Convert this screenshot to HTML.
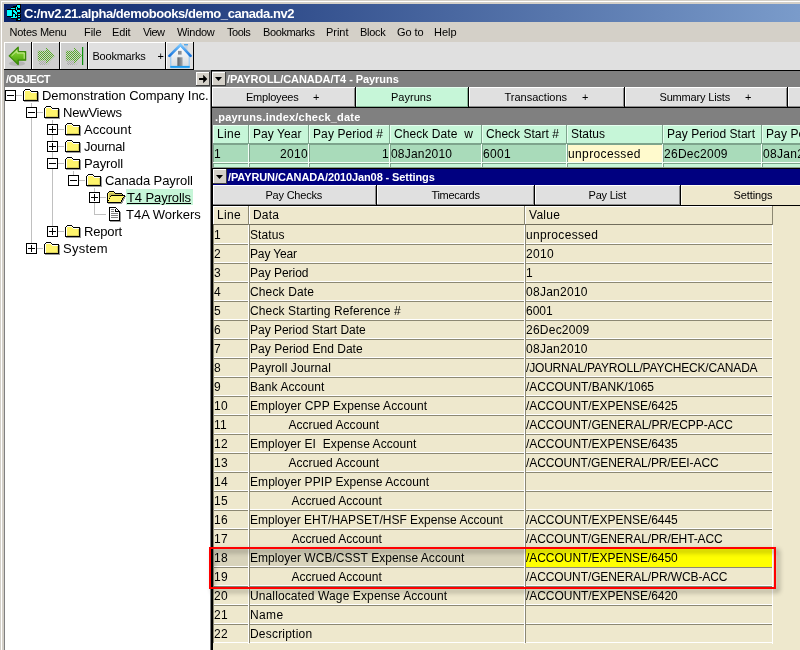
<!DOCTYPE html>
<html><head><meta charset="utf-8"><title>NewViews</title><style>html,body{margin:0;padding:0}
body{width:800px;height:650px;overflow:hidden;position:relative;background:#d4d0c8;font-family:"Liberation Sans",sans-serif}
#bg,#tx,#top{position:absolute;left:0;top:0;width:800px;height:650px;overflow:hidden}
#tx{will-change:transform}
#bg>div,#bg>svg,#tx>span,#top>div{position:absolute;display:block}
#tx>span{white-space:nowrap;line-height:normal}
</style></head><body>
<div id="bg">
<div style="left:0px;top:0px;width:800px;height:650px;background:#d4d0c8;"></div>
<div style="left:1px;top:1px;width:799px;height:1px;background:#fff;"></div>
<div style="left:1px;top:1px;width:1px;height:649px;background:#fff;"></div>
<div style="left:4px;top:4px;width:796px;height:18px;background:linear-gradient(90deg,#0a246a 0px,#a6caf0 1106px);"></div>
<svg style="left:7px;top:4px" width="15" height="17" viewBox="0 0 15 17" shape-rendering="crispEdges"><rect x="10" y="0" width="4" height="1" fill="#000"/><rect x="9" y="1" width="1" height="1" fill="#000"/><rect x="10" y="1" width="3" height="1" fill="#00ffff"/><rect x="13" y="1" width="1" height="1" fill="#000"/><rect x="6" y="2" width="4" height="1" fill="#000"/><rect x="10" y="2" width="3" height="1" fill="#00ffff"/><rect x="13" y="2" width="1" height="1" fill="#000"/><rect x="4" y="3" width="5" height="1" fill="#000"/><rect x="9" y="3" width="1" height="1" fill="#00ffff"/><rect x="10" y="3" width="1" height="1" fill="#000"/><rect x="11" y="3" width="2" height="1" fill="#00ffff"/><rect x="13" y="3" width="1" height="1" fill="#000"/><rect x="4" y="4" width="4" height="1" fill="#00ffff"/><rect x="8" y="4" width="1" height="1" fill="#000"/><rect x="9" y="4" width="1" height="1" fill="#00ffff"/><rect x="10" y="4" width="4" height="1" fill="#000"/><rect x="0" y="5" width="9" height="1" fill="#000"/><rect x="9" y="5" width="1" height="1" fill="#00ffff"/><rect x="10" y="5" width="4" height="1" fill="#000"/><rect x="0" y="6" width="5" height="1" fill="#00ffff"/><rect x="5" y="6" width="1" height="1" fill="#000"/><rect x="6" y="6" width="2" height="1" fill="#00ffff"/><rect x="8" y="6" width="2" height="1" fill="#000"/><rect x="10" y="6" width="3" height="1" fill="#00ffff"/><rect x="13" y="6" width="1" height="1" fill="#000"/><rect x="0" y="7" width="5" height="1" fill="#00ffff"/><rect x="5" y="7" width="1" height="1" fill="#000"/><rect x="6" y="7" width="3" height="1" fill="#00ffff"/><rect x="9" y="7" width="1" height="1" fill="#000"/><rect x="10" y="7" width="3" height="1" fill="#00ffff"/><rect x="13" y="7" width="1" height="1" fill="#000"/><rect x="0" y="8" width="5" height="1" fill="#00ffff"/><rect x="5" y="8" width="2" height="1" fill="#000"/><rect x="7" y="8" width="3" height="1" fill="#00ffff"/><rect x="10" y="8" width="4" height="1" fill="#000"/><rect x="0" y="9" width="5" height="1" fill="#00ffff"/><rect x="5" y="9" width="3" height="1" fill="#000"/><rect x="8" y="9" width="2" height="1" fill="#00ffff"/><rect x="10" y="9" width="3" height="1" fill="#000"/><rect x="0" y="10" width="5" height="1" fill="#00ffff"/><rect x="5" y="10" width="1" height="1" fill="#000"/><rect x="6" y="10" width="2" height="1" fill="#00ffff"/><rect x="8" y="10" width="1" height="1" fill="#000"/><rect x="9" y="10" width="1" height="1" fill="#00ffff"/><rect x="10" y="10" width="1" height="1" fill="#000"/><rect x="11" y="10" width="2" height="1" fill="#00ffff"/><rect x="13" y="10" width="1" height="1" fill="#000"/><rect x="0" y="11" width="5" height="1" fill="#00ffff"/><rect x="5" y="11" width="1" height="1" fill="#000"/><rect x="6" y="11" width="2" height="1" fill="#00ffff"/><rect x="8" y="11" width="6" height="1" fill="#000"/><rect x="0" y="12" width="6" height="1" fill="#000"/><rect x="6" y="12" width="2" height="1" fill="#00ffff"/><rect x="8" y="12" width="1" height="1" fill="#000"/><rect x="9" y="12" width="1" height="1" fill="#00ffff"/><rect x="10" y="12" width="1" height="1" fill="#000"/><rect x="11" y="12" width="2" height="1" fill="#00ffff"/><rect x="13" y="12" width="1" height="1" fill="#000"/><rect x="4" y="13" width="6" height="1" fill="#00ffff"/><rect x="10" y="13" width="4" height="1" fill="#000"/><rect x="4" y="14" width="7" height="1" fill="#000"/><rect x="9" y="15" width="2" height="1" fill="#000"/><rect x="11" y="15" width="2" height="1" fill="#00ffff"/><rect x="13" y="15" width="1" height="1" fill="#000"/><rect x="9" y="16" width="5" height="1" fill="#000"/></svg>
<div style="left:4px;top:42px;width:796px;height:28px;background:#e0e0e0;"></div>
<div style="left:4px;top:42px;width:28px;height:28px;background:#cfcfcf;"></div>
<div style="left:4px;top:42px;width:28px;height:1px;background:#fff;"></div>
<div style="left:4px;top:42px;width:1px;height:28px;background:#fff;"></div>
<div style="left:4px;top:69px;width:28px;height:1px;background:#000;"></div>
<div style="left:31px;top:42px;width:1px;height:28px;background:#000;"></div>
<div style="left:32px;top:42px;width:28px;height:28px;background:#cfcfcf;"></div>
<div style="left:32px;top:42px;width:28px;height:1px;background:#fff;"></div>
<div style="left:32px;top:42px;width:1px;height:28px;background:#fff;"></div>
<div style="left:32px;top:69px;width:28px;height:1px;background:#000;"></div>
<div style="left:59px;top:42px;width:1px;height:28px;background:#000;"></div>
<div style="left:60px;top:42px;width:28px;height:28px;background:#cfcfcf;"></div>
<div style="left:60px;top:42px;width:28px;height:1px;background:#fff;"></div>
<div style="left:60px;top:42px;width:1px;height:28px;background:#fff;"></div>
<div style="left:60px;top:69px;width:28px;height:1px;background:#000;"></div>
<div style="left:87px;top:42px;width:1px;height:28px;background:#000;"></div>
<div style="left:88px;top:42px;width:78px;height:28px;background:#e0e0e0;"></div>
<div style="left:88px;top:42px;width:78px;height:1px;background:#fff;"></div>
<div style="left:88px;top:42px;width:1px;height:28px;background:#fff;"></div>
<div style="left:88px;top:69px;width:78px;height:1px;background:#000;"></div>
<div style="left:165px;top:42px;width:1px;height:28px;background:#000;"></div>
<div style="left:166px;top:42px;width:28px;height:28px;background:#e0e0e0;"></div>
<div style="left:166px;top:42px;width:28px;height:1px;background:#fff;"></div>
<div style="left:166px;top:42px;width:1px;height:28px;background:#fff;"></div>
<div style="left:166px;top:69px;width:28px;height:1px;background:#000;"></div>
<div style="left:193px;top:42px;width:1px;height:28px;background:#000;"></div>
<svg style="left:8px;top:46px" width="20" height="21" viewBox="0 0 20 21"><defs><linearGradient id="ga" x1="0" y1="0" x2="0" y2="1"><stop offset="0" stop-color="#a8dc60"/><stop offset=".5" stop-color="#6cc020"/><stop offset="1" stop-color="#3f9408"/></linearGradient></defs>
<ellipse cx="9" cy="17.5" rx="8" ry="2.5" fill="#000" opacity=".12"/>
<path d="M1.2 9.9 L10.2 1.2 L10.2 5.6 L17.6 5.6 L17.6 14.2 L10.2 14.2 L10.2 18.6 Z" fill="url(#ga)" stroke="#3a8a08" stroke-width="1.3" stroke-linejoin="round"/><path d="M3.6 9.9 L9 4.6 L9 7 L16.2 7 L16.2 12.8" fill="none" stroke="#d4f2a0" stroke-width="1" opacity=".9"/></svg>
<svg style="left:36px;top:46px" width="20" height="20" viewBox="0 0 20 20"><defs><pattern id="st" width="2" height="2" patternUnits="userSpaceOnUse"><rect width="1" height="1" fill="#58ac28"/><rect x="1" y="1" width="1" height="1" fill="#58ac28"/></pattern><pattern id="sh" width="2" height="2" patternUnits="userSpaceOnUse"><rect width="1" height="1" fill="#000" opacity=".18"/><rect x="1" y="1" width="1" height="1" fill="#000" opacity=".18"/></pattern></defs>
<path d="M3 15 H10 V19 L17 13 L12 19 H3Z" fill="url(#sh)"/>
<path d="M19 9.7 L10 0.9 L10 4.8 L1.8 4.8 L1.8 14.4 L10 14.4 L10 18.5 Z" fill="url(#st)"/></svg>
<svg style="left:64px;top:46px" width="22" height="20" viewBox="0 0 22 20">
<path d="M3 15 H10 V19 L17 13 L12 19 H3Z" fill="url(#sh)"/>
<path d="M18 9.7 L10 0.9 L10 4.8 L1.9 4.8 L1.9 14.4 L10 14.4 L10 18.5 Z" fill="url(#st)"/><rect x="18" y="1" width="1.2" height="18" fill="#0c900c"/></svg>
<svg style="left:168px;top:43px" width="24" height="26" viewBox="0 0 24 26"><defs><linearGradient id="gh" x1="0" y1="0" x2="0" y2="1"><stop offset="0" stop-color="#ffffff"/><stop offset="1" stop-color="#d4d8dc"/></linearGradient><linearGradient id="gr" x1="0" y1="0" x2="0" y2="1"><stop offset="0" stop-color="#7cc8ff"/><stop offset="1" stop-color="#1874dc"/></linearGradient><linearGradient id="gd" x1="0" y1="0" x2="1" y2="0"><stop offset="0" stop-color="#5c6268"/><stop offset="1" stop-color="#a0a6ac"/></linearGradient></defs>
<rect x="16.5" y="1.5" width="3" height="7" fill="#c4d0e0"/><rect x="16" y="1" width="4" height="1.4" fill="#58a8e8"/>
<path d="M2.8 12 L2.8 24.7 L21.2 24.7 L21.2 12 L12.4 3.2 Z" fill="url(#gh)" stroke="#8cc4f4" stroke-width="1"/>
<path d="M1.4 12.8 L12.4 1.9 L22.6 12.8" fill="none" stroke="url(#gr)" stroke-width="2.6" stroke-linejoin="miter" stroke-linecap="round"/>
<rect x="9.4" y="14.3" width="5.2" height="8.7" fill="url(#gd)"/><rect x="10" y="7.9" width="3.6" height="3.7" fill="#888e96"/>
<rect x="2.3" y="22.9" width="19.4" height="1.9" fill="#1e9cf0"/></svg>
<div style="left:4px;top:70px;width:207px;height:17px;background:#808080;"></div>
<div style="left:4px;top:87px;width:1px;height:563px;background:#808080;"></div>
<div style="left:5px;top:87px;width:205px;height:563px;background:#fff;"></div>
<div style="left:196px;top:72px;width:14px;height:14px;background:#d4d0c8;"></div>
<div style="left:196px;top:72px;width:14px;height:1px;background:#fff;"></div>
<div style="left:196px;top:72px;width:1px;height:14px;background:#fff;"></div>
<div style="left:196px;top:85px;width:14px;height:1px;background:#404040;"></div>
<div style="left:209px;top:72px;width:1px;height:14px;background:#404040;"></div>
<svg style="left:199px;top:75px" width="9" height="9" viewBox="0 0 9 9"><path d="M0 3h4.2v-3.2l4.1 4.2-4.1 4.2v-3.2h-4.2z" fill="#000"/></svg>
<div style="left:31px;top:103px;width:1px;height:145px;background:#c0c0c0;"></div>
<div style="left:52px;top:120px;width:1px;height:111px;background:#c0c0c0;"></div>
<div style="left:73px;top:171px;width:1px;height:4px;background:#c0c0c0;"></div>
<div style="left:94px;top:188px;width:1px;height:27px;background:#c0c0c0;"></div>
<div style="left:16px;top:95px;width:6px;height:1px;background:#c0c0c0;"></div>
<div style="left:5px;top:90px;width:11px;height:11px;background:#fff;border:1px solid #000;box-sizing:border-box;"></div>
<div style="left:7px;top:95px;width:7px;height:1px;background:#000;"></div>
<svg style="left:23px;top:89px" width="16" height="13" viewBox="0 0 16 13" shape-rendering="crispEdges"><rect x="2" y="0" width="5" height="1" fill="#000"/><rect x="1" y="1" width="1" height="1" fill="#000"/><rect x="2" y="1" width="5" height="1" fill="#fff"/><rect x="7" y="1" width="1" height="1" fill="#000"/><rect x="0" y="2" width="1" height="1" fill="#000"/><rect x="1" y="2" width="1" height="1" fill="#fff"/><rect x="2" y="2" width="5" height="1" fill="#fef46c"/><rect x="7" y="2" width="1" height="1" fill="#fff"/><rect x="8" y="2" width="7" height="1" fill="#000"/><rect x="0" y="3" width="1" height="1" fill="#000"/><rect x="1" y="3" width="1" height="1" fill="#fff"/><rect x="2" y="3" width="6" height="1" fill="#fef46c"/><rect x="8" y="3" width="6" height="1" fill="#fff"/><rect x="14" y="3" width="1" height="1" fill="#000"/><rect x="15" y="3" width="1" height="1" fill="rgba(0,0,0,.4)"/><rect x="0" y="4" width="1" height="1" fill="#000"/><rect x="1" y="4" width="1" height="1" fill="#fff"/><rect x="2" y="4" width="11" height="1" fill="#fef46c"/><rect x="13" y="4" width="1" height="1" fill="#d8cf5c"/><rect x="14" y="4" width="1" height="1" fill="#000"/><rect x="15" y="4" width="1" height="1" fill="rgba(0,0,0,.4)"/><rect x="0" y="5" width="1" height="1" fill="#000"/><rect x="1" y="5" width="1" height="1" fill="#fff"/><rect x="2" y="5" width="11" height="1" fill="#fef46c"/><rect x="13" y="5" width="1" height="1" fill="#d8cf5c"/><rect x="14" y="5" width="1" height="1" fill="#000"/><rect x="15" y="5" width="1" height="1" fill="rgba(0,0,0,.4)"/><rect x="0" y="6" width="1" height="1" fill="#000"/><rect x="1" y="6" width="1" height="1" fill="#fff"/><rect x="2" y="6" width="11" height="1" fill="#fef46c"/><rect x="13" y="6" width="1" height="1" fill="#d8cf5c"/><rect x="14" y="6" width="1" height="1" fill="#000"/><rect x="15" y="6" width="1" height="1" fill="rgba(0,0,0,.4)"/><rect x="0" y="7" width="1" height="1" fill="#000"/><rect x="1" y="7" width="1" height="1" fill="#fff"/><rect x="2" y="7" width="11" height="1" fill="#fef46c"/><rect x="13" y="7" width="1" height="1" fill="#d8cf5c"/><rect x="14" y="7" width="1" height="1" fill="#000"/><rect x="15" y="7" width="1" height="1" fill="rgba(0,0,0,.4)"/><rect x="0" y="8" width="1" height="1" fill="#000"/><rect x="1" y="8" width="1" height="1" fill="#fff"/><rect x="2" y="8" width="11" height="1" fill="#fef46c"/><rect x="13" y="8" width="1" height="1" fill="#d8cf5c"/><rect x="14" y="8" width="1" height="1" fill="#000"/><rect x="15" y="8" width="1" height="1" fill="rgba(0,0,0,.4)"/><rect x="0" y="9" width="1" height="1" fill="#000"/><rect x="1" y="9" width="1" height="1" fill="#fff"/><rect x="2" y="9" width="11" height="1" fill="#fef46c"/><rect x="13" y="9" width="1" height="1" fill="#d8cf5c"/><rect x="14" y="9" width="1" height="1" fill="#000"/><rect x="15" y="9" width="1" height="1" fill="rgba(0,0,0,.4)"/><rect x="0" y="10" width="1" height="1" fill="#000"/><rect x="1" y="10" width="1" height="1" fill="#fff"/><rect x="2" y="10" width="12" height="1" fill="#d8cf5c"/><rect x="14" y="10" width="1" height="1" fill="#000"/><rect x="15" y="10" width="1" height="1" fill="rgba(0,0,0,.4)"/><rect x="0" y="11" width="15" height="1" fill="#000"/><rect x="15" y="11" width="1" height="1" fill="rgba(0,0,0,.4)"/><rect x="1" y="12" width="15" height="1" fill="rgba(0,0,0,.4)"/></svg>
<div style="left:37px;top:112px;width:6px;height:1px;background:#c0c0c0;"></div>
<div style="left:26px;top:107px;width:11px;height:11px;background:#fff;border:1px solid #000;box-sizing:border-box;"></div>
<div style="left:28px;top:112px;width:7px;height:1px;background:#000;"></div>
<svg style="left:44px;top:106px" width="16" height="13" viewBox="0 0 16 13" shape-rendering="crispEdges"><rect x="2" y="0" width="5" height="1" fill="#000"/><rect x="1" y="1" width="1" height="1" fill="#000"/><rect x="2" y="1" width="5" height="1" fill="#fff"/><rect x="7" y="1" width="1" height="1" fill="#000"/><rect x="0" y="2" width="1" height="1" fill="#000"/><rect x="1" y="2" width="1" height="1" fill="#fff"/><rect x="2" y="2" width="5" height="1" fill="#fef46c"/><rect x="7" y="2" width="1" height="1" fill="#fff"/><rect x="8" y="2" width="7" height="1" fill="#000"/><rect x="0" y="3" width="1" height="1" fill="#000"/><rect x="1" y="3" width="1" height="1" fill="#fff"/><rect x="2" y="3" width="6" height="1" fill="#fef46c"/><rect x="8" y="3" width="6" height="1" fill="#fff"/><rect x="14" y="3" width="1" height="1" fill="#000"/><rect x="15" y="3" width="1" height="1" fill="rgba(0,0,0,.4)"/><rect x="0" y="4" width="1" height="1" fill="#000"/><rect x="1" y="4" width="1" height="1" fill="#fff"/><rect x="2" y="4" width="11" height="1" fill="#fef46c"/><rect x="13" y="4" width="1" height="1" fill="#d8cf5c"/><rect x="14" y="4" width="1" height="1" fill="#000"/><rect x="15" y="4" width="1" height="1" fill="rgba(0,0,0,.4)"/><rect x="0" y="5" width="1" height="1" fill="#000"/><rect x="1" y="5" width="1" height="1" fill="#fff"/><rect x="2" y="5" width="11" height="1" fill="#fef46c"/><rect x="13" y="5" width="1" height="1" fill="#d8cf5c"/><rect x="14" y="5" width="1" height="1" fill="#000"/><rect x="15" y="5" width="1" height="1" fill="rgba(0,0,0,.4)"/><rect x="0" y="6" width="1" height="1" fill="#000"/><rect x="1" y="6" width="1" height="1" fill="#fff"/><rect x="2" y="6" width="11" height="1" fill="#fef46c"/><rect x="13" y="6" width="1" height="1" fill="#d8cf5c"/><rect x="14" y="6" width="1" height="1" fill="#000"/><rect x="15" y="6" width="1" height="1" fill="rgba(0,0,0,.4)"/><rect x="0" y="7" width="1" height="1" fill="#000"/><rect x="1" y="7" width="1" height="1" fill="#fff"/><rect x="2" y="7" width="11" height="1" fill="#fef46c"/><rect x="13" y="7" width="1" height="1" fill="#d8cf5c"/><rect x="14" y="7" width="1" height="1" fill="#000"/><rect x="15" y="7" width="1" height="1" fill="rgba(0,0,0,.4)"/><rect x="0" y="8" width="1" height="1" fill="#000"/><rect x="1" y="8" width="1" height="1" fill="#fff"/><rect x="2" y="8" width="11" height="1" fill="#fef46c"/><rect x="13" y="8" width="1" height="1" fill="#d8cf5c"/><rect x="14" y="8" width="1" height="1" fill="#000"/><rect x="15" y="8" width="1" height="1" fill="rgba(0,0,0,.4)"/><rect x="0" y="9" width="1" height="1" fill="#000"/><rect x="1" y="9" width="1" height="1" fill="#fff"/><rect x="2" y="9" width="11" height="1" fill="#fef46c"/><rect x="13" y="9" width="1" height="1" fill="#d8cf5c"/><rect x="14" y="9" width="1" height="1" fill="#000"/><rect x="15" y="9" width="1" height="1" fill="rgba(0,0,0,.4)"/><rect x="0" y="10" width="1" height="1" fill="#000"/><rect x="1" y="10" width="1" height="1" fill="#fff"/><rect x="2" y="10" width="12" height="1" fill="#d8cf5c"/><rect x="14" y="10" width="1" height="1" fill="#000"/><rect x="15" y="10" width="1" height="1" fill="rgba(0,0,0,.4)"/><rect x="0" y="11" width="15" height="1" fill="#000"/><rect x="15" y="11" width="1" height="1" fill="rgba(0,0,0,.4)"/><rect x="1" y="12" width="15" height="1" fill="rgba(0,0,0,.4)"/></svg>
<div style="left:58px;top:129px;width:6px;height:1px;background:#c0c0c0;"></div>
<div style="left:47px;top:124px;width:11px;height:11px;background:#fff;border:1px solid #000;box-sizing:border-box;"></div>
<div style="left:49px;top:129px;width:7px;height:1px;background:#000;"></div>
<div style="left:52px;top:126px;width:1px;height:7px;background:#000;"></div>
<svg style="left:65px;top:123px" width="16" height="13" viewBox="0 0 16 13" shape-rendering="crispEdges"><rect x="2" y="0" width="5" height="1" fill="#000"/><rect x="1" y="1" width="1" height="1" fill="#000"/><rect x="2" y="1" width="5" height="1" fill="#fff"/><rect x="7" y="1" width="1" height="1" fill="#000"/><rect x="0" y="2" width="1" height="1" fill="#000"/><rect x="1" y="2" width="1" height="1" fill="#fff"/><rect x="2" y="2" width="5" height="1" fill="#fef46c"/><rect x="7" y="2" width="1" height="1" fill="#fff"/><rect x="8" y="2" width="7" height="1" fill="#000"/><rect x="0" y="3" width="1" height="1" fill="#000"/><rect x="1" y="3" width="1" height="1" fill="#fff"/><rect x="2" y="3" width="6" height="1" fill="#fef46c"/><rect x="8" y="3" width="6" height="1" fill="#fff"/><rect x="14" y="3" width="1" height="1" fill="#000"/><rect x="15" y="3" width="1" height="1" fill="rgba(0,0,0,.4)"/><rect x="0" y="4" width="1" height="1" fill="#000"/><rect x="1" y="4" width="1" height="1" fill="#fff"/><rect x="2" y="4" width="11" height="1" fill="#fef46c"/><rect x="13" y="4" width="1" height="1" fill="#d8cf5c"/><rect x="14" y="4" width="1" height="1" fill="#000"/><rect x="15" y="4" width="1" height="1" fill="rgba(0,0,0,.4)"/><rect x="0" y="5" width="1" height="1" fill="#000"/><rect x="1" y="5" width="1" height="1" fill="#fff"/><rect x="2" y="5" width="11" height="1" fill="#fef46c"/><rect x="13" y="5" width="1" height="1" fill="#d8cf5c"/><rect x="14" y="5" width="1" height="1" fill="#000"/><rect x="15" y="5" width="1" height="1" fill="rgba(0,0,0,.4)"/><rect x="0" y="6" width="1" height="1" fill="#000"/><rect x="1" y="6" width="1" height="1" fill="#fff"/><rect x="2" y="6" width="11" height="1" fill="#fef46c"/><rect x="13" y="6" width="1" height="1" fill="#d8cf5c"/><rect x="14" y="6" width="1" height="1" fill="#000"/><rect x="15" y="6" width="1" height="1" fill="rgba(0,0,0,.4)"/><rect x="0" y="7" width="1" height="1" fill="#000"/><rect x="1" y="7" width="1" height="1" fill="#fff"/><rect x="2" y="7" width="11" height="1" fill="#fef46c"/><rect x="13" y="7" width="1" height="1" fill="#d8cf5c"/><rect x="14" y="7" width="1" height="1" fill="#000"/><rect x="15" y="7" width="1" height="1" fill="rgba(0,0,0,.4)"/><rect x="0" y="8" width="1" height="1" fill="#000"/><rect x="1" y="8" width="1" height="1" fill="#fff"/><rect x="2" y="8" width="11" height="1" fill="#fef46c"/><rect x="13" y="8" width="1" height="1" fill="#d8cf5c"/><rect x="14" y="8" width="1" height="1" fill="#000"/><rect x="15" y="8" width="1" height="1" fill="rgba(0,0,0,.4)"/><rect x="0" y="9" width="1" height="1" fill="#000"/><rect x="1" y="9" width="1" height="1" fill="#fff"/><rect x="2" y="9" width="11" height="1" fill="#fef46c"/><rect x="13" y="9" width="1" height="1" fill="#d8cf5c"/><rect x="14" y="9" width="1" height="1" fill="#000"/><rect x="15" y="9" width="1" height="1" fill="rgba(0,0,0,.4)"/><rect x="0" y="10" width="1" height="1" fill="#000"/><rect x="1" y="10" width="1" height="1" fill="#fff"/><rect x="2" y="10" width="12" height="1" fill="#d8cf5c"/><rect x="14" y="10" width="1" height="1" fill="#000"/><rect x="15" y="10" width="1" height="1" fill="rgba(0,0,0,.4)"/><rect x="0" y="11" width="15" height="1" fill="#000"/><rect x="15" y="11" width="1" height="1" fill="rgba(0,0,0,.4)"/><rect x="1" y="12" width="15" height="1" fill="rgba(0,0,0,.4)"/></svg>
<div style="left:58px;top:146px;width:6px;height:1px;background:#c0c0c0;"></div>
<div style="left:47px;top:141px;width:11px;height:11px;background:#fff;border:1px solid #000;box-sizing:border-box;"></div>
<div style="left:49px;top:146px;width:7px;height:1px;background:#000;"></div>
<div style="left:52px;top:143px;width:1px;height:7px;background:#000;"></div>
<svg style="left:65px;top:140px" width="16" height="13" viewBox="0 0 16 13" shape-rendering="crispEdges"><rect x="2" y="0" width="5" height="1" fill="#000"/><rect x="1" y="1" width="1" height="1" fill="#000"/><rect x="2" y="1" width="5" height="1" fill="#fff"/><rect x="7" y="1" width="1" height="1" fill="#000"/><rect x="0" y="2" width="1" height="1" fill="#000"/><rect x="1" y="2" width="1" height="1" fill="#fff"/><rect x="2" y="2" width="5" height="1" fill="#fef46c"/><rect x="7" y="2" width="1" height="1" fill="#fff"/><rect x="8" y="2" width="7" height="1" fill="#000"/><rect x="0" y="3" width="1" height="1" fill="#000"/><rect x="1" y="3" width="1" height="1" fill="#fff"/><rect x="2" y="3" width="6" height="1" fill="#fef46c"/><rect x="8" y="3" width="6" height="1" fill="#fff"/><rect x="14" y="3" width="1" height="1" fill="#000"/><rect x="15" y="3" width="1" height="1" fill="rgba(0,0,0,.4)"/><rect x="0" y="4" width="1" height="1" fill="#000"/><rect x="1" y="4" width="1" height="1" fill="#fff"/><rect x="2" y="4" width="11" height="1" fill="#fef46c"/><rect x="13" y="4" width="1" height="1" fill="#d8cf5c"/><rect x="14" y="4" width="1" height="1" fill="#000"/><rect x="15" y="4" width="1" height="1" fill="rgba(0,0,0,.4)"/><rect x="0" y="5" width="1" height="1" fill="#000"/><rect x="1" y="5" width="1" height="1" fill="#fff"/><rect x="2" y="5" width="11" height="1" fill="#fef46c"/><rect x="13" y="5" width="1" height="1" fill="#d8cf5c"/><rect x="14" y="5" width="1" height="1" fill="#000"/><rect x="15" y="5" width="1" height="1" fill="rgba(0,0,0,.4)"/><rect x="0" y="6" width="1" height="1" fill="#000"/><rect x="1" y="6" width="1" height="1" fill="#fff"/><rect x="2" y="6" width="11" height="1" fill="#fef46c"/><rect x="13" y="6" width="1" height="1" fill="#d8cf5c"/><rect x="14" y="6" width="1" height="1" fill="#000"/><rect x="15" y="6" width="1" height="1" fill="rgba(0,0,0,.4)"/><rect x="0" y="7" width="1" height="1" fill="#000"/><rect x="1" y="7" width="1" height="1" fill="#fff"/><rect x="2" y="7" width="11" height="1" fill="#fef46c"/><rect x="13" y="7" width="1" height="1" fill="#d8cf5c"/><rect x="14" y="7" width="1" height="1" fill="#000"/><rect x="15" y="7" width="1" height="1" fill="rgba(0,0,0,.4)"/><rect x="0" y="8" width="1" height="1" fill="#000"/><rect x="1" y="8" width="1" height="1" fill="#fff"/><rect x="2" y="8" width="11" height="1" fill="#fef46c"/><rect x="13" y="8" width="1" height="1" fill="#d8cf5c"/><rect x="14" y="8" width="1" height="1" fill="#000"/><rect x="15" y="8" width="1" height="1" fill="rgba(0,0,0,.4)"/><rect x="0" y="9" width="1" height="1" fill="#000"/><rect x="1" y="9" width="1" height="1" fill="#fff"/><rect x="2" y="9" width="11" height="1" fill="#fef46c"/><rect x="13" y="9" width="1" height="1" fill="#d8cf5c"/><rect x="14" y="9" width="1" height="1" fill="#000"/><rect x="15" y="9" width="1" height="1" fill="rgba(0,0,0,.4)"/><rect x="0" y="10" width="1" height="1" fill="#000"/><rect x="1" y="10" width="1" height="1" fill="#fff"/><rect x="2" y="10" width="12" height="1" fill="#d8cf5c"/><rect x="14" y="10" width="1" height="1" fill="#000"/><rect x="15" y="10" width="1" height="1" fill="rgba(0,0,0,.4)"/><rect x="0" y="11" width="15" height="1" fill="#000"/><rect x="15" y="11" width="1" height="1" fill="rgba(0,0,0,.4)"/><rect x="1" y="12" width="15" height="1" fill="rgba(0,0,0,.4)"/></svg>
<div style="left:58px;top:163px;width:6px;height:1px;background:#c0c0c0;"></div>
<div style="left:47px;top:158px;width:11px;height:11px;background:#fff;border:1px solid #000;box-sizing:border-box;"></div>
<div style="left:49px;top:163px;width:7px;height:1px;background:#000;"></div>
<svg style="left:65px;top:157px" width="16" height="13" viewBox="0 0 16 13" shape-rendering="crispEdges"><rect x="2" y="0" width="5" height="1" fill="#000"/><rect x="1" y="1" width="1" height="1" fill="#000"/><rect x="2" y="1" width="5" height="1" fill="#fff"/><rect x="7" y="1" width="1" height="1" fill="#000"/><rect x="0" y="2" width="1" height="1" fill="#000"/><rect x="1" y="2" width="1" height="1" fill="#fff"/><rect x="2" y="2" width="5" height="1" fill="#fef46c"/><rect x="7" y="2" width="1" height="1" fill="#fff"/><rect x="8" y="2" width="7" height="1" fill="#000"/><rect x="0" y="3" width="1" height="1" fill="#000"/><rect x="1" y="3" width="1" height="1" fill="#fff"/><rect x="2" y="3" width="6" height="1" fill="#fef46c"/><rect x="8" y="3" width="6" height="1" fill="#fff"/><rect x="14" y="3" width="1" height="1" fill="#000"/><rect x="15" y="3" width="1" height="1" fill="rgba(0,0,0,.4)"/><rect x="0" y="4" width="1" height="1" fill="#000"/><rect x="1" y="4" width="1" height="1" fill="#fff"/><rect x="2" y="4" width="11" height="1" fill="#fef46c"/><rect x="13" y="4" width="1" height="1" fill="#d8cf5c"/><rect x="14" y="4" width="1" height="1" fill="#000"/><rect x="15" y="4" width="1" height="1" fill="rgba(0,0,0,.4)"/><rect x="0" y="5" width="1" height="1" fill="#000"/><rect x="1" y="5" width="1" height="1" fill="#fff"/><rect x="2" y="5" width="11" height="1" fill="#fef46c"/><rect x="13" y="5" width="1" height="1" fill="#d8cf5c"/><rect x="14" y="5" width="1" height="1" fill="#000"/><rect x="15" y="5" width="1" height="1" fill="rgba(0,0,0,.4)"/><rect x="0" y="6" width="1" height="1" fill="#000"/><rect x="1" y="6" width="1" height="1" fill="#fff"/><rect x="2" y="6" width="11" height="1" fill="#fef46c"/><rect x="13" y="6" width="1" height="1" fill="#d8cf5c"/><rect x="14" y="6" width="1" height="1" fill="#000"/><rect x="15" y="6" width="1" height="1" fill="rgba(0,0,0,.4)"/><rect x="0" y="7" width="1" height="1" fill="#000"/><rect x="1" y="7" width="1" height="1" fill="#fff"/><rect x="2" y="7" width="11" height="1" fill="#fef46c"/><rect x="13" y="7" width="1" height="1" fill="#d8cf5c"/><rect x="14" y="7" width="1" height="1" fill="#000"/><rect x="15" y="7" width="1" height="1" fill="rgba(0,0,0,.4)"/><rect x="0" y="8" width="1" height="1" fill="#000"/><rect x="1" y="8" width="1" height="1" fill="#fff"/><rect x="2" y="8" width="11" height="1" fill="#fef46c"/><rect x="13" y="8" width="1" height="1" fill="#d8cf5c"/><rect x="14" y="8" width="1" height="1" fill="#000"/><rect x="15" y="8" width="1" height="1" fill="rgba(0,0,0,.4)"/><rect x="0" y="9" width="1" height="1" fill="#000"/><rect x="1" y="9" width="1" height="1" fill="#fff"/><rect x="2" y="9" width="11" height="1" fill="#fef46c"/><rect x="13" y="9" width="1" height="1" fill="#d8cf5c"/><rect x="14" y="9" width="1" height="1" fill="#000"/><rect x="15" y="9" width="1" height="1" fill="rgba(0,0,0,.4)"/><rect x="0" y="10" width="1" height="1" fill="#000"/><rect x="1" y="10" width="1" height="1" fill="#fff"/><rect x="2" y="10" width="12" height="1" fill="#d8cf5c"/><rect x="14" y="10" width="1" height="1" fill="#000"/><rect x="15" y="10" width="1" height="1" fill="rgba(0,0,0,.4)"/><rect x="0" y="11" width="15" height="1" fill="#000"/><rect x="15" y="11" width="1" height="1" fill="rgba(0,0,0,.4)"/><rect x="1" y="12" width="15" height="1" fill="rgba(0,0,0,.4)"/></svg>
<div style="left:79px;top:180px;width:6px;height:1px;background:#c0c0c0;"></div>
<div style="left:68px;top:175px;width:11px;height:11px;background:#fff;border:1px solid #000;box-sizing:border-box;"></div>
<div style="left:70px;top:180px;width:7px;height:1px;background:#000;"></div>
<svg style="left:86px;top:174px" width="16" height="13" viewBox="0 0 16 13" shape-rendering="crispEdges"><rect x="2" y="0" width="5" height="1" fill="#000"/><rect x="1" y="1" width="1" height="1" fill="#000"/><rect x="2" y="1" width="5" height="1" fill="#fff"/><rect x="7" y="1" width="1" height="1" fill="#000"/><rect x="0" y="2" width="1" height="1" fill="#000"/><rect x="1" y="2" width="1" height="1" fill="#fff"/><rect x="2" y="2" width="5" height="1" fill="#fef46c"/><rect x="7" y="2" width="1" height="1" fill="#fff"/><rect x="8" y="2" width="7" height="1" fill="#000"/><rect x="0" y="3" width="1" height="1" fill="#000"/><rect x="1" y="3" width="1" height="1" fill="#fff"/><rect x="2" y="3" width="6" height="1" fill="#fef46c"/><rect x="8" y="3" width="6" height="1" fill="#fff"/><rect x="14" y="3" width="1" height="1" fill="#000"/><rect x="15" y="3" width="1" height="1" fill="rgba(0,0,0,.4)"/><rect x="0" y="4" width="1" height="1" fill="#000"/><rect x="1" y="4" width="1" height="1" fill="#fff"/><rect x="2" y="4" width="11" height="1" fill="#fef46c"/><rect x="13" y="4" width="1" height="1" fill="#d8cf5c"/><rect x="14" y="4" width="1" height="1" fill="#000"/><rect x="15" y="4" width="1" height="1" fill="rgba(0,0,0,.4)"/><rect x="0" y="5" width="1" height="1" fill="#000"/><rect x="1" y="5" width="1" height="1" fill="#fff"/><rect x="2" y="5" width="11" height="1" fill="#fef46c"/><rect x="13" y="5" width="1" height="1" fill="#d8cf5c"/><rect x="14" y="5" width="1" height="1" fill="#000"/><rect x="15" y="5" width="1" height="1" fill="rgba(0,0,0,.4)"/><rect x="0" y="6" width="1" height="1" fill="#000"/><rect x="1" y="6" width="1" height="1" fill="#fff"/><rect x="2" y="6" width="11" height="1" fill="#fef46c"/><rect x="13" y="6" width="1" height="1" fill="#d8cf5c"/><rect x="14" y="6" width="1" height="1" fill="#000"/><rect x="15" y="6" width="1" height="1" fill="rgba(0,0,0,.4)"/><rect x="0" y="7" width="1" height="1" fill="#000"/><rect x="1" y="7" width="1" height="1" fill="#fff"/><rect x="2" y="7" width="11" height="1" fill="#fef46c"/><rect x="13" y="7" width="1" height="1" fill="#d8cf5c"/><rect x="14" y="7" width="1" height="1" fill="#000"/><rect x="15" y="7" width="1" height="1" fill="rgba(0,0,0,.4)"/><rect x="0" y="8" width="1" height="1" fill="#000"/><rect x="1" y="8" width="1" height="1" fill="#fff"/><rect x="2" y="8" width="11" height="1" fill="#fef46c"/><rect x="13" y="8" width="1" height="1" fill="#d8cf5c"/><rect x="14" y="8" width="1" height="1" fill="#000"/><rect x="15" y="8" width="1" height="1" fill="rgba(0,0,0,.4)"/><rect x="0" y="9" width="1" height="1" fill="#000"/><rect x="1" y="9" width="1" height="1" fill="#fff"/><rect x="2" y="9" width="11" height="1" fill="#fef46c"/><rect x="13" y="9" width="1" height="1" fill="#d8cf5c"/><rect x="14" y="9" width="1" height="1" fill="#000"/><rect x="15" y="9" width="1" height="1" fill="rgba(0,0,0,.4)"/><rect x="0" y="10" width="1" height="1" fill="#000"/><rect x="1" y="10" width="1" height="1" fill="#fff"/><rect x="2" y="10" width="12" height="1" fill="#d8cf5c"/><rect x="14" y="10" width="1" height="1" fill="#000"/><rect x="15" y="10" width="1" height="1" fill="rgba(0,0,0,.4)"/><rect x="0" y="11" width="15" height="1" fill="#000"/><rect x="15" y="11" width="1" height="1" fill="rgba(0,0,0,.4)"/><rect x="1" y="12" width="15" height="1" fill="rgba(0,0,0,.4)"/></svg>
<div style="left:100px;top:197px;width:6px;height:1px;background:#c0c0c0;"></div>
<div style="left:89px;top:192px;width:11px;height:11px;background:#fff;border:1px solid #000;box-sizing:border-box;"></div>
<div style="left:91px;top:197px;width:7px;height:1px;background:#000;"></div>
<div style="left:94px;top:194px;width:1px;height:7px;background:#000;"></div>
<svg style="left:107px;top:191px" width="19" height="13" viewBox="0 0 19 13" shape-rendering="crispEdges"><rect x="2" y="0" width="5" height="1" fill="#000"/><rect x="1" y="1" width="1" height="1" fill="#000"/><rect x="2" y="1" width="5" height="1" fill="#fef46c"/><rect x="7" y="1" width="1" height="1" fill="#000"/><rect x="0" y="2" width="1" height="1" fill="#000"/><rect x="1" y="2" width="1" height="1" fill="#fef46c"/><rect x="2" y="2" width="6" height="1" fill="#c9c05f"/><rect x="8" y="2" width="7" height="1" fill="#000"/><rect x="0" y="3" width="1" height="1" fill="#000"/><rect x="1" y="3" width="1" height="1" fill="#fef46c"/><rect x="2" y="3" width="13" height="1" fill="#c9c05f"/><rect x="15" y="3" width="1" height="1" fill="#000"/><rect x="0" y="4" width="1" height="1" fill="#000"/><rect x="1" y="4" width="1" height="1" fill="#fef46c"/><rect x="2" y="4" width="2" height="1" fill="#c9c05f"/><rect x="4" y="4" width="14" height="1" fill="#000"/><rect x="0" y="5" width="1" height="1" fill="#000"/><rect x="1" y="5" width="1" height="1" fill="#fef46c"/><rect x="2" y="5" width="1" height="1" fill="#c9c05f"/><rect x="3" y="5" width="1" height="1" fill="#000"/><rect x="4" y="5" width="13" height="1" fill="#fef46c"/><rect x="17" y="5" width="1" height="1" fill="#000"/><rect x="18" y="5" width="1" height="1" fill="rgba(0,0,0,.4)"/><rect x="0" y="6" width="1" height="1" fill="#000"/><rect x="1" y="6" width="1" height="1" fill="#fef46c"/><rect x="2" y="6" width="1" height="1" fill="#c9c05f"/><rect x="3" y="6" width="13" height="1" fill="#fef46c"/><rect x="16" y="6" width="1" height="1" fill="#000"/><rect x="17" y="6" width="1" height="1" fill="rgba(0,0,0,.4)"/><rect x="0" y="7" width="1" height="1" fill="#000"/><rect x="1" y="7" width="1" height="1" fill="#fef46c"/><rect x="2" y="7" width="1" height="1" fill="#000"/><rect x="3" y="7" width="12" height="1" fill="#fef46c"/><rect x="15" y="7" width="1" height="1" fill="#000"/><rect x="16" y="7" width="2" height="1" fill="rgba(0,0,0,.4)"/><rect x="0" y="8" width="1" height="1" fill="#000"/><rect x="1" y="8" width="14" height="1" fill="#fef46c"/><rect x="15" y="8" width="1" height="1" fill="#000"/><rect x="16" y="8" width="1" height="1" fill="rgba(0,0,0,.4)"/><rect x="0" y="9" width="2" height="1" fill="#000"/><rect x="2" y="9" width="12" height="1" fill="#fef46c"/><rect x="14" y="9" width="1" height="1" fill="#000"/><rect x="15" y="9" width="2" height="1" fill="rgba(0,0,0,.4)"/><rect x="0" y="10" width="1" height="1" fill="#000"/><rect x="1" y="10" width="13" height="1" fill="#fef46c"/><rect x="14" y="10" width="1" height="1" fill="#000"/><rect x="15" y="10" width="1" height="1" fill="rgba(0,0,0,.4)"/><rect x="0" y="11" width="14" height="1" fill="#000"/><rect x="14" y="11" width="2" height="1" fill="rgba(0,0,0,.4)"/><rect x="1" y="12" width="14" height="1" fill="rgba(0,0,0,.4)"/></svg>
<div style="left:126px;top:189px;width:67px;height:16px;background:#c6f6d8;"></div>
<div style="left:94px;top:214px;width:12px;height:1px;background:#c0c0c0;"></div>
<svg style="left:109px;top:207px" width="12" height="15" viewBox="0 0 12 15" shape-rendering="crispEdges"><rect x="0" y="0" width="7" height="1" fill="#000"/><rect x="0" y="1" width="1" height="1" fill="#000"/><rect x="1" y="1" width="6" height="1" fill="#fff"/><rect x="7" y="1" width="1" height="1" fill="#000"/><rect x="0" y="2" width="1" height="1" fill="#000"/><rect x="1" y="2" width="1" height="1" fill="#fff"/><rect x="2" y="2" width="3" height="1" fill="#808080"/><rect x="5" y="2" width="1" height="1" fill="#fff"/><rect x="6" y="2" width="1" height="1" fill="#000"/><rect x="7" y="2" width="1" height="1" fill="#fff"/><rect x="8" y="2" width="1" height="1" fill="#000"/><rect x="0" y="3" width="1" height="1" fill="#000"/><rect x="1" y="3" width="5" height="1" fill="#fff"/><rect x="6" y="3" width="1" height="1" fill="#000"/><rect x="7" y="3" width="2" height="1" fill="#fff"/><rect x="9" y="3" width="1" height="1" fill="#000"/><rect x="0" y="4" width="1" height="1" fill="#000"/><rect x="1" y="4" width="1" height="1" fill="#fff"/><rect x="2" y="4" width="3" height="1" fill="#808080"/><rect x="5" y="4" width="1" height="1" fill="#fff"/><rect x="6" y="4" width="5" height="1" fill="#000"/><rect x="0" y="5" width="1" height="1" fill="#000"/><rect x="1" y="5" width="9" height="1" fill="#fff"/><rect x="10" y="5" width="1" height="1" fill="#000"/><rect x="11" y="5" width="1" height="1" fill="rgba(0,0,0,.4)"/><rect x="0" y="6" width="1" height="1" fill="#000"/><rect x="1" y="6" width="1" height="1" fill="#fff"/><rect x="2" y="6" width="7" height="1" fill="#808080"/><rect x="9" y="6" width="1" height="1" fill="#fff"/><rect x="10" y="6" width="1" height="1" fill="#000"/><rect x="11" y="6" width="1" height="1" fill="rgba(0,0,0,.4)"/><rect x="0" y="7" width="1" height="1" fill="#000"/><rect x="1" y="7" width="9" height="1" fill="#fff"/><rect x="10" y="7" width="1" height="1" fill="#000"/><rect x="11" y="7" width="1" height="1" fill="rgba(0,0,0,.4)"/><rect x="0" y="8" width="1" height="1" fill="#000"/><rect x="1" y="8" width="1" height="1" fill="#fff"/><rect x="2" y="8" width="7" height="1" fill="#808080"/><rect x="9" y="8" width="1" height="1" fill="#fff"/><rect x="10" y="8" width="1" height="1" fill="#000"/><rect x="11" y="8" width="1" height="1" fill="rgba(0,0,0,.4)"/><rect x="0" y="9" width="1" height="1" fill="#000"/><rect x="1" y="9" width="9" height="1" fill="#fff"/><rect x="10" y="9" width="1" height="1" fill="#000"/><rect x="11" y="9" width="1" height="1" fill="rgba(0,0,0,.4)"/><rect x="0" y="10" width="1" height="1" fill="#000"/><rect x="1" y="10" width="1" height="1" fill="#fff"/><rect x="2" y="10" width="7" height="1" fill="#808080"/><rect x="9" y="10" width="1" height="1" fill="#fff"/><rect x="10" y="10" width="1" height="1" fill="#000"/><rect x="11" y="10" width="1" height="1" fill="rgba(0,0,0,.4)"/><rect x="0" y="11" width="1" height="1" fill="#000"/><rect x="1" y="11" width="9" height="1" fill="#fff"/><rect x="10" y="11" width="1" height="1" fill="#000"/><rect x="11" y="11" width="1" height="1" fill="rgba(0,0,0,.4)"/><rect x="0" y="12" width="1" height="1" fill="#000"/><rect x="1" y="12" width="9" height="1" fill="#fff"/><rect x="10" y="12" width="1" height="1" fill="#000"/><rect x="11" y="12" width="1" height="1" fill="rgba(0,0,0,.4)"/><rect x="0" y="13" width="11" height="1" fill="#000"/><rect x="11" y="13" width="1" height="1" fill="rgba(0,0,0,.4)"/><rect x="1" y="14" width="11" height="1" fill="rgba(0,0,0,.4)"/></svg>
<div style="left:58px;top:231px;width:6px;height:1px;background:#c0c0c0;"></div>
<div style="left:47px;top:226px;width:11px;height:11px;background:#fff;border:1px solid #000;box-sizing:border-box;"></div>
<div style="left:49px;top:231px;width:7px;height:1px;background:#000;"></div>
<div style="left:52px;top:228px;width:1px;height:7px;background:#000;"></div>
<svg style="left:65px;top:225px" width="16" height="13" viewBox="0 0 16 13" shape-rendering="crispEdges"><rect x="2" y="0" width="5" height="1" fill="#000"/><rect x="1" y="1" width="1" height="1" fill="#000"/><rect x="2" y="1" width="5" height="1" fill="#fff"/><rect x="7" y="1" width="1" height="1" fill="#000"/><rect x="0" y="2" width="1" height="1" fill="#000"/><rect x="1" y="2" width="1" height="1" fill="#fff"/><rect x="2" y="2" width="5" height="1" fill="#fef46c"/><rect x="7" y="2" width="1" height="1" fill="#fff"/><rect x="8" y="2" width="7" height="1" fill="#000"/><rect x="0" y="3" width="1" height="1" fill="#000"/><rect x="1" y="3" width="1" height="1" fill="#fff"/><rect x="2" y="3" width="6" height="1" fill="#fef46c"/><rect x="8" y="3" width="6" height="1" fill="#fff"/><rect x="14" y="3" width="1" height="1" fill="#000"/><rect x="15" y="3" width="1" height="1" fill="rgba(0,0,0,.4)"/><rect x="0" y="4" width="1" height="1" fill="#000"/><rect x="1" y="4" width="1" height="1" fill="#fff"/><rect x="2" y="4" width="11" height="1" fill="#fef46c"/><rect x="13" y="4" width="1" height="1" fill="#d8cf5c"/><rect x="14" y="4" width="1" height="1" fill="#000"/><rect x="15" y="4" width="1" height="1" fill="rgba(0,0,0,.4)"/><rect x="0" y="5" width="1" height="1" fill="#000"/><rect x="1" y="5" width="1" height="1" fill="#fff"/><rect x="2" y="5" width="11" height="1" fill="#fef46c"/><rect x="13" y="5" width="1" height="1" fill="#d8cf5c"/><rect x="14" y="5" width="1" height="1" fill="#000"/><rect x="15" y="5" width="1" height="1" fill="rgba(0,0,0,.4)"/><rect x="0" y="6" width="1" height="1" fill="#000"/><rect x="1" y="6" width="1" height="1" fill="#fff"/><rect x="2" y="6" width="11" height="1" fill="#fef46c"/><rect x="13" y="6" width="1" height="1" fill="#d8cf5c"/><rect x="14" y="6" width="1" height="1" fill="#000"/><rect x="15" y="6" width="1" height="1" fill="rgba(0,0,0,.4)"/><rect x="0" y="7" width="1" height="1" fill="#000"/><rect x="1" y="7" width="1" height="1" fill="#fff"/><rect x="2" y="7" width="11" height="1" fill="#fef46c"/><rect x="13" y="7" width="1" height="1" fill="#d8cf5c"/><rect x="14" y="7" width="1" height="1" fill="#000"/><rect x="15" y="7" width="1" height="1" fill="rgba(0,0,0,.4)"/><rect x="0" y="8" width="1" height="1" fill="#000"/><rect x="1" y="8" width="1" height="1" fill="#fff"/><rect x="2" y="8" width="11" height="1" fill="#fef46c"/><rect x="13" y="8" width="1" height="1" fill="#d8cf5c"/><rect x="14" y="8" width="1" height="1" fill="#000"/><rect x="15" y="8" width="1" height="1" fill="rgba(0,0,0,.4)"/><rect x="0" y="9" width="1" height="1" fill="#000"/><rect x="1" y="9" width="1" height="1" fill="#fff"/><rect x="2" y="9" width="11" height="1" fill="#fef46c"/><rect x="13" y="9" width="1" height="1" fill="#d8cf5c"/><rect x="14" y="9" width="1" height="1" fill="#000"/><rect x="15" y="9" width="1" height="1" fill="rgba(0,0,0,.4)"/><rect x="0" y="10" width="1" height="1" fill="#000"/><rect x="1" y="10" width="1" height="1" fill="#fff"/><rect x="2" y="10" width="12" height="1" fill="#d8cf5c"/><rect x="14" y="10" width="1" height="1" fill="#000"/><rect x="15" y="10" width="1" height="1" fill="rgba(0,0,0,.4)"/><rect x="0" y="11" width="15" height="1" fill="#000"/><rect x="15" y="11" width="1" height="1" fill="rgba(0,0,0,.4)"/><rect x="1" y="12" width="15" height="1" fill="rgba(0,0,0,.4)"/></svg>
<div style="left:37px;top:248px;width:6px;height:1px;background:#c0c0c0;"></div>
<div style="left:26px;top:243px;width:11px;height:11px;background:#fff;border:1px solid #000;box-sizing:border-box;"></div>
<div style="left:28px;top:248px;width:7px;height:1px;background:#000;"></div>
<div style="left:31px;top:245px;width:1px;height:7px;background:#000;"></div>
<svg style="left:44px;top:242px" width="16" height="13" viewBox="0 0 16 13" shape-rendering="crispEdges"><rect x="2" y="0" width="5" height="1" fill="#000"/><rect x="1" y="1" width="1" height="1" fill="#000"/><rect x="2" y="1" width="5" height="1" fill="#fff"/><rect x="7" y="1" width="1" height="1" fill="#000"/><rect x="0" y="2" width="1" height="1" fill="#000"/><rect x="1" y="2" width="1" height="1" fill="#fff"/><rect x="2" y="2" width="5" height="1" fill="#fef46c"/><rect x="7" y="2" width="1" height="1" fill="#fff"/><rect x="8" y="2" width="7" height="1" fill="#000"/><rect x="0" y="3" width="1" height="1" fill="#000"/><rect x="1" y="3" width="1" height="1" fill="#fff"/><rect x="2" y="3" width="6" height="1" fill="#fef46c"/><rect x="8" y="3" width="6" height="1" fill="#fff"/><rect x="14" y="3" width="1" height="1" fill="#000"/><rect x="15" y="3" width="1" height="1" fill="rgba(0,0,0,.4)"/><rect x="0" y="4" width="1" height="1" fill="#000"/><rect x="1" y="4" width="1" height="1" fill="#fff"/><rect x="2" y="4" width="11" height="1" fill="#fef46c"/><rect x="13" y="4" width="1" height="1" fill="#d8cf5c"/><rect x="14" y="4" width="1" height="1" fill="#000"/><rect x="15" y="4" width="1" height="1" fill="rgba(0,0,0,.4)"/><rect x="0" y="5" width="1" height="1" fill="#000"/><rect x="1" y="5" width="1" height="1" fill="#fff"/><rect x="2" y="5" width="11" height="1" fill="#fef46c"/><rect x="13" y="5" width="1" height="1" fill="#d8cf5c"/><rect x="14" y="5" width="1" height="1" fill="#000"/><rect x="15" y="5" width="1" height="1" fill="rgba(0,0,0,.4)"/><rect x="0" y="6" width="1" height="1" fill="#000"/><rect x="1" y="6" width="1" height="1" fill="#fff"/><rect x="2" y="6" width="11" height="1" fill="#fef46c"/><rect x="13" y="6" width="1" height="1" fill="#d8cf5c"/><rect x="14" y="6" width="1" height="1" fill="#000"/><rect x="15" y="6" width="1" height="1" fill="rgba(0,0,0,.4)"/><rect x="0" y="7" width="1" height="1" fill="#000"/><rect x="1" y="7" width="1" height="1" fill="#fff"/><rect x="2" y="7" width="11" height="1" fill="#fef46c"/><rect x="13" y="7" width="1" height="1" fill="#d8cf5c"/><rect x="14" y="7" width="1" height="1" fill="#000"/><rect x="15" y="7" width="1" height="1" fill="rgba(0,0,0,.4)"/><rect x="0" y="8" width="1" height="1" fill="#000"/><rect x="1" y="8" width="1" height="1" fill="#fff"/><rect x="2" y="8" width="11" height="1" fill="#fef46c"/><rect x="13" y="8" width="1" height="1" fill="#d8cf5c"/><rect x="14" y="8" width="1" height="1" fill="#000"/><rect x="15" y="8" width="1" height="1" fill="rgba(0,0,0,.4)"/><rect x="0" y="9" width="1" height="1" fill="#000"/><rect x="1" y="9" width="1" height="1" fill="#fff"/><rect x="2" y="9" width="11" height="1" fill="#fef46c"/><rect x="13" y="9" width="1" height="1" fill="#d8cf5c"/><rect x="14" y="9" width="1" height="1" fill="#000"/><rect x="15" y="9" width="1" height="1" fill="rgba(0,0,0,.4)"/><rect x="0" y="10" width="1" height="1" fill="#000"/><rect x="1" y="10" width="1" height="1" fill="#fff"/><rect x="2" y="10" width="12" height="1" fill="#d8cf5c"/><rect x="14" y="10" width="1" height="1" fill="#000"/><rect x="15" y="10" width="1" height="1" fill="rgba(0,0,0,.4)"/><rect x="0" y="11" width="15" height="1" fill="#000"/><rect x="15" y="11" width="1" height="1" fill="rgba(0,0,0,.4)"/><rect x="1" y="12" width="15" height="1" fill="rgba(0,0,0,.4)"/></svg>
<div style="left:210px;top:70px;width:1px;height:580px;background:#808080;"></div>
<div style="left:211px;top:70px;width:1px;height:580px;background:#000;"></div>
<div style="left:211px;top:70px;width:589px;height:1px;background:#000;"></div>
<div style="left:212px;top:71px;width:588px;height:16px;background:#808080;"></div>
<div style="left:212px;top:72px;width:14px;height:14px;background:#d4d0c8;"></div>
<div style="left:212px;top:72px;width:14px;height:1px;background:#fff;"></div>
<div style="left:212px;top:72px;width:1px;height:14px;background:#fff;"></div>
<div style="left:212px;top:85px;width:14px;height:1px;background:#404040;"></div>
<div style="left:225px;top:72px;width:1px;height:14px;background:#404040;"></div>
<svg style="left:215px;top:77px" width="7" height="4" viewBox="0 0 7 4"><path d="M0 0h7l-3.5 4z" fill="#000"/></svg>
<div style="left:212px;top:87px;width:588px;height:1px;background:#fff;"></div>
<div style="left:212px;top:88px;width:588px;height:18px;background:#e0e0e0;"></div>
<div style="left:212px;top:106px;width:588px;height:1px;background:#888;"></div>
<div style="left:212px;top:107px;width:588px;height:1px;background:#000;"></div>
<div style="left:212px;top:87px;width:143px;height:20px;background:#e0e0e0;"></div>
<div style="left:212px;top:87px;width:143px;height:1px;background:#fff;"></div>
<div style="left:212px;top:87px;width:1px;height:20px;background:#fff;"></div>
<div style="left:212px;top:106px;width:143px;height:1px;background:#8c8c8c;"></div>
<div style="left:354px;top:88px;width:1px;height:19px;background:#8c8c8c;"></div>
<div style="left:355px;top:87px;width:1px;height:21px;background:#000;"></div>
<div style="left:356px;top:87px;width:112px;height:20px;background:#c6f6d8;"></div>
<div style="left:356px;top:87px;width:112px;height:1px;background:#e4fff0;"></div>
<div style="left:356px;top:87px;width:1px;height:20px;background:#e4fff0;"></div>
<div style="left:356px;top:106px;width:112px;height:1px;background:#86b496;"></div>
<div style="left:467px;top:88px;width:1px;height:19px;background:#86b496;"></div>
<div style="left:468px;top:87px;width:1px;height:21px;background:#000;"></div>
<div style="left:469px;top:87px;width:155px;height:20px;background:#e0e0e0;"></div>
<div style="left:469px;top:87px;width:155px;height:1px;background:#fff;"></div>
<div style="left:469px;top:87px;width:1px;height:20px;background:#fff;"></div>
<div style="left:469px;top:106px;width:155px;height:1px;background:#8c8c8c;"></div>
<div style="left:623px;top:88px;width:1px;height:19px;background:#8c8c8c;"></div>
<div style="left:624px;top:87px;width:1px;height:21px;background:#000;"></div>
<div style="left:625px;top:87px;width:162px;height:20px;background:#e0e0e0;"></div>
<div style="left:625px;top:87px;width:162px;height:1px;background:#fff;"></div>
<div style="left:625px;top:87px;width:1px;height:20px;background:#fff;"></div>
<div style="left:625px;top:106px;width:162px;height:1px;background:#8c8c8c;"></div>
<div style="left:786px;top:88px;width:1px;height:19px;background:#8c8c8c;"></div>
<div style="left:787px;top:87px;width:1px;height:21px;background:#000;"></div>
<div style="left:788px;top:87px;width:42px;height:20px;background:#e0e0e0;"></div>
<div style="left:788px;top:87px;width:42px;height:1px;background:#fff;"></div>
<div style="left:788px;top:87px;width:1px;height:20px;background:#fff;"></div>
<div style="left:788px;top:106px;width:42px;height:1px;background:#8c8c8c;"></div>
<div style="left:829px;top:88px;width:1px;height:19px;background:#8c8c8c;"></div>
<div style="left:830px;top:87px;width:1px;height:21px;background:#000;"></div>
<div style="left:212px;top:108px;width:588px;height:17px;background:#808080;"></div>
<div style="left:212px;top:125px;width:1px;height:43px;background:#808080;"></div>
<div style="left:213px;top:125px;width:587px;height:43px;background:#c6f6d8;"></div>
<div style="left:213px;top:125px;width:36px;height:1px;background:#e6fff0;"></div>
<div style="left:213px;top:125px;width:1px;height:19px;background:#e6fff0;"></div>
<div style="left:213px;top:143px;width:36px;height:1px;background:#7da48c;"></div>
<div style="left:248px;top:125px;width:1px;height:19px;background:#7da48c;"></div>
<div style="left:213px;top:144px;width:36px;height:19px;background:#a9dbba;"></div>
<div style="left:213px;top:144px;width:36px;height:1px;background:#7da48c;"></div>
<div style="left:213px;top:144px;width:1px;height:19px;background:#7da48c;"></div>
<div style="left:213px;top:162px;width:36px;height:1px;background:#f4fff8;"></div>
<div style="left:248px;top:144px;width:1px;height:19px;background:#f4fff8;"></div>
<div style="left:213px;top:163px;width:36px;height:1px;background:#7da48c;"></div>
<div style="left:213px;top:163px;width:1px;height:5px;background:#7da48c;"></div>
<div style="left:248px;top:163px;width:1px;height:5px;background:#f4fff8;"></div>
<div style="left:249px;top:125px;width:60px;height:1px;background:#e6fff0;"></div>
<div style="left:249px;top:125px;width:1px;height:19px;background:#e6fff0;"></div>
<div style="left:249px;top:143px;width:60px;height:1px;background:#7da48c;"></div>
<div style="left:308px;top:125px;width:1px;height:19px;background:#7da48c;"></div>
<div style="left:249px;top:144px;width:60px;height:19px;background:#a9dbba;"></div>
<div style="left:249px;top:144px;width:60px;height:1px;background:#7da48c;"></div>
<div style="left:249px;top:144px;width:1px;height:19px;background:#7da48c;"></div>
<div style="left:249px;top:162px;width:60px;height:1px;background:#f4fff8;"></div>
<div style="left:308px;top:144px;width:1px;height:19px;background:#f4fff8;"></div>
<div style="left:249px;top:163px;width:60px;height:1px;background:#7da48c;"></div>
<div style="left:249px;top:163px;width:1px;height:5px;background:#7da48c;"></div>
<div style="left:308px;top:163px;width:1px;height:5px;background:#f4fff8;"></div>
<div style="left:309px;top:125px;width:81px;height:1px;background:#e6fff0;"></div>
<div style="left:309px;top:125px;width:1px;height:19px;background:#e6fff0;"></div>
<div style="left:309px;top:143px;width:81px;height:1px;background:#7da48c;"></div>
<div style="left:389px;top:125px;width:1px;height:19px;background:#7da48c;"></div>
<div style="left:309px;top:144px;width:81px;height:19px;background:#a9dbba;"></div>
<div style="left:309px;top:144px;width:81px;height:1px;background:#7da48c;"></div>
<div style="left:309px;top:144px;width:1px;height:19px;background:#7da48c;"></div>
<div style="left:309px;top:162px;width:81px;height:1px;background:#f4fff8;"></div>
<div style="left:389px;top:144px;width:1px;height:19px;background:#f4fff8;"></div>
<div style="left:309px;top:163px;width:81px;height:1px;background:#7da48c;"></div>
<div style="left:309px;top:163px;width:1px;height:5px;background:#7da48c;"></div>
<div style="left:389px;top:163px;width:1px;height:5px;background:#f4fff8;"></div>
<div style="left:390px;top:125px;width:92px;height:1px;background:#e6fff0;"></div>
<div style="left:390px;top:125px;width:1px;height:19px;background:#e6fff0;"></div>
<div style="left:390px;top:143px;width:92px;height:1px;background:#7da48c;"></div>
<div style="left:481px;top:125px;width:1px;height:19px;background:#7da48c;"></div>
<div style="left:390px;top:144px;width:92px;height:19px;background:#a9dbba;"></div>
<div style="left:390px;top:144px;width:92px;height:1px;background:#7da48c;"></div>
<div style="left:390px;top:144px;width:1px;height:19px;background:#7da48c;"></div>
<div style="left:390px;top:162px;width:92px;height:1px;background:#f4fff8;"></div>
<div style="left:481px;top:144px;width:1px;height:19px;background:#f4fff8;"></div>
<div style="left:390px;top:163px;width:92px;height:1px;background:#7da48c;"></div>
<div style="left:390px;top:163px;width:1px;height:5px;background:#7da48c;"></div>
<div style="left:481px;top:163px;width:1px;height:5px;background:#f4fff8;"></div>
<div style="left:482px;top:125px;width:85px;height:1px;background:#e6fff0;"></div>
<div style="left:482px;top:125px;width:1px;height:19px;background:#e6fff0;"></div>
<div style="left:482px;top:143px;width:85px;height:1px;background:#7da48c;"></div>
<div style="left:566px;top:125px;width:1px;height:19px;background:#7da48c;"></div>
<div style="left:482px;top:144px;width:85px;height:19px;background:#a9dbba;"></div>
<div style="left:482px;top:144px;width:85px;height:1px;background:#7da48c;"></div>
<div style="left:482px;top:144px;width:1px;height:19px;background:#7da48c;"></div>
<div style="left:482px;top:162px;width:85px;height:1px;background:#f4fff8;"></div>
<div style="left:566px;top:144px;width:1px;height:19px;background:#f4fff8;"></div>
<div style="left:482px;top:163px;width:85px;height:1px;background:#7da48c;"></div>
<div style="left:482px;top:163px;width:1px;height:5px;background:#7da48c;"></div>
<div style="left:566px;top:163px;width:1px;height:5px;background:#f4fff8;"></div>
<div style="left:567px;top:125px;width:96px;height:1px;background:#e6fff0;"></div>
<div style="left:567px;top:125px;width:1px;height:19px;background:#e6fff0;"></div>
<div style="left:567px;top:143px;width:96px;height:1px;background:#7da48c;"></div>
<div style="left:662px;top:125px;width:1px;height:19px;background:#7da48c;"></div>
<div style="left:567px;top:144px;width:96px;height:19px;background:#fffacd;"></div>
<div style="left:567px;top:144px;width:96px;height:1px;background:#7da48c;"></div>
<div style="left:567px;top:144px;width:1px;height:19px;background:#7da48c;"></div>
<div style="left:567px;top:162px;width:96px;height:1px;background:#f4fff8;"></div>
<div style="left:662px;top:144px;width:1px;height:19px;background:#f4fff8;"></div>
<div style="left:567px;top:163px;width:96px;height:1px;background:#7da48c;"></div>
<div style="left:567px;top:163px;width:1px;height:5px;background:#7da48c;"></div>
<div style="left:662px;top:163px;width:1px;height:5px;background:#f4fff8;"></div>
<div style="left:663px;top:125px;width:99px;height:1px;background:#e6fff0;"></div>
<div style="left:663px;top:125px;width:1px;height:19px;background:#e6fff0;"></div>
<div style="left:663px;top:143px;width:99px;height:1px;background:#7da48c;"></div>
<div style="left:761px;top:125px;width:1px;height:19px;background:#7da48c;"></div>
<div style="left:663px;top:144px;width:99px;height:19px;background:#a9dbba;"></div>
<div style="left:663px;top:144px;width:99px;height:1px;background:#7da48c;"></div>
<div style="left:663px;top:144px;width:1px;height:19px;background:#7da48c;"></div>
<div style="left:663px;top:162px;width:99px;height:1px;background:#f4fff8;"></div>
<div style="left:761px;top:144px;width:1px;height:19px;background:#f4fff8;"></div>
<div style="left:663px;top:163px;width:99px;height:1px;background:#7da48c;"></div>
<div style="left:663px;top:163px;width:1px;height:5px;background:#7da48c;"></div>
<div style="left:761px;top:163px;width:1px;height:5px;background:#f4fff8;"></div>
<div style="left:762px;top:125px;width:99px;height:1px;background:#e6fff0;"></div>
<div style="left:762px;top:125px;width:1px;height:19px;background:#e6fff0;"></div>
<div style="left:762px;top:143px;width:99px;height:1px;background:#7da48c;"></div>
<div style="left:860px;top:125px;width:1px;height:19px;background:#7da48c;"></div>
<div style="left:762px;top:144px;width:99px;height:19px;background:#a9dbba;"></div>
<div style="left:762px;top:144px;width:99px;height:1px;background:#7da48c;"></div>
<div style="left:762px;top:144px;width:1px;height:19px;background:#7da48c;"></div>
<div style="left:762px;top:162px;width:99px;height:1px;background:#f4fff8;"></div>
<div style="left:860px;top:144px;width:1px;height:19px;background:#f4fff8;"></div>
<div style="left:762px;top:163px;width:99px;height:1px;background:#7da48c;"></div>
<div style="left:762px;top:163px;width:1px;height:5px;background:#7da48c;"></div>
<div style="left:860px;top:163px;width:1px;height:5px;background:#f4fff8;"></div>
<div style="left:213px;top:167px;width:587px;height:1px;background:#8a9c90;"></div>
<div style="left:212px;top:168px;width:588px;height:1px;background:#000;"></div>
<div style="left:212px;top:168px;width:1px;height:482px;background:#000;"></div>
<div style="left:213px;top:169px;width:587px;height:16px;background:#000080;"></div>
<div style="left:213px;top:169px;width:14px;height:15px;background:#d4d0c8;"></div>
<div style="left:213px;top:169px;width:14px;height:1px;background:#fff;"></div>
<div style="left:213px;top:169px;width:1px;height:15px;background:#fff;"></div>
<div style="left:213px;top:183px;width:14px;height:1px;background:#404040;"></div>
<div style="left:226px;top:169px;width:1px;height:15px;background:#404040;"></div>
<svg style="left:216px;top:175px" width="7" height="4" viewBox="0 0 7 4"><path d="M0 0h7l-3.5 4z" fill="#000"/></svg>
<div style="left:213px;top:185px;width:587px;height:1px;background:#fff;"></div>
<div style="left:213px;top:186px;width:587px;height:18px;background:#e0e0e0;"></div>
<div style="left:213px;top:204px;width:587px;height:1px;background:#888;"></div>
<div style="left:213px;top:205px;width:587px;height:1px;background:#000;"></div>
<div style="left:213px;top:185px;width:163px;height:20px;background:#e0e0e0;"></div>
<div style="left:213px;top:185px;width:163px;height:1px;background:#fff;"></div>
<div style="left:213px;top:185px;width:1px;height:20px;background:#fff;"></div>
<div style="left:213px;top:204px;width:163px;height:1px;background:#8c8c8c;"></div>
<div style="left:375px;top:186px;width:1px;height:19px;background:#8c8c8c;"></div>
<div style="left:376px;top:185px;width:1px;height:21px;background:#000;"></div>
<div style="left:377px;top:185px;width:157px;height:20px;background:#e0e0e0;"></div>
<div style="left:377px;top:185px;width:157px;height:1px;background:#fff;"></div>
<div style="left:377px;top:185px;width:1px;height:20px;background:#fff;"></div>
<div style="left:377px;top:204px;width:157px;height:1px;background:#8c8c8c;"></div>
<div style="left:533px;top:186px;width:1px;height:19px;background:#8c8c8c;"></div>
<div style="left:534px;top:185px;width:1px;height:21px;background:#000;"></div>
<div style="left:535px;top:185px;width:145px;height:20px;background:#e0e0e0;"></div>
<div style="left:535px;top:185px;width:145px;height:1px;background:#fff;"></div>
<div style="left:535px;top:185px;width:1px;height:20px;background:#fff;"></div>
<div style="left:535px;top:204px;width:145px;height:1px;background:#8c8c8c;"></div>
<div style="left:679px;top:186px;width:1px;height:19px;background:#8c8c8c;"></div>
<div style="left:680px;top:185px;width:1px;height:21px;background:#000;"></div>
<div style="left:681px;top:185px;width:149px;height:20px;background:#eee8cd;"></div>
<div style="left:681px;top:185px;width:149px;height:1px;background:#fffdf0;"></div>
<div style="left:681px;top:185px;width:1px;height:20px;background:#fffdf0;"></div>
<div style="left:829px;top:186px;width:1px;height:19px;background:#eee8cd;"></div>
<div style="left:830px;top:185px;width:1px;height:21px;background:#000;"></div>
<div style="left:213px;top:206px;width:587px;height:444px;background:#eee8cd;"></div>
<div style="left:213px;top:206px;width:36px;height:1px;background:#fff;"></div>
<div style="left:213px;top:206px;width:1px;height:19px;background:#fff;"></div>
<div style="left:213px;top:224px;width:36px;height:1px;background:#716d5c;"></div>
<div style="left:248px;top:206px;width:1px;height:19px;background:#8c8873;"></div>
<div style="left:249px;top:206px;width:276px;height:1px;background:#fff;"></div>
<div style="left:249px;top:206px;width:1px;height:19px;background:#fff;"></div>
<div style="left:249px;top:224px;width:276px;height:1px;background:#716d5c;"></div>
<div style="left:524px;top:206px;width:1px;height:19px;background:#8c8873;"></div>
<div style="left:525px;top:206px;width:248px;height:1px;background:#fff;"></div>
<div style="left:525px;top:206px;width:1px;height:19px;background:#fff;"></div>
<div style="left:525px;top:224px;width:248px;height:1px;background:#716d5c;"></div>
<div style="left:772px;top:206px;width:1px;height:19px;background:#8c8873;"></div>
<div style="left:213px;top:243px;width:560px;height:1px;background:#fff;"></div>
<div style="left:213px;top:262px;width:560px;height:1px;background:#fff;"></div>
<div style="left:213px;top:244px;width:560px;height:1px;background:#8c8873;"></div>
<div style="left:213px;top:281px;width:560px;height:1px;background:#fff;"></div>
<div style="left:213px;top:263px;width:560px;height:1px;background:#8c8873;"></div>
<div style="left:213px;top:300px;width:560px;height:1px;background:#fff;"></div>
<div style="left:213px;top:282px;width:560px;height:1px;background:#8c8873;"></div>
<div style="left:213px;top:319px;width:560px;height:1px;background:#fff;"></div>
<div style="left:213px;top:301px;width:560px;height:1px;background:#8c8873;"></div>
<div style="left:213px;top:338px;width:560px;height:1px;background:#fff;"></div>
<div style="left:213px;top:320px;width:560px;height:1px;background:#8c8873;"></div>
<div style="left:213px;top:357px;width:560px;height:1px;background:#fff;"></div>
<div style="left:213px;top:339px;width:560px;height:1px;background:#8c8873;"></div>
<div style="left:213px;top:376px;width:560px;height:1px;background:#fff;"></div>
<div style="left:213px;top:358px;width:560px;height:1px;background:#8c8873;"></div>
<div style="left:213px;top:395px;width:560px;height:1px;background:#fff;"></div>
<div style="left:213px;top:377px;width:560px;height:1px;background:#8c8873;"></div>
<div style="left:213px;top:414px;width:560px;height:1px;background:#fff;"></div>
<div style="left:213px;top:396px;width:560px;height:1px;background:#8c8873;"></div>
<div style="left:213px;top:433px;width:560px;height:1px;background:#fff;"></div>
<div style="left:213px;top:415px;width:560px;height:1px;background:#8c8873;"></div>
<div style="left:213px;top:452px;width:560px;height:1px;background:#fff;"></div>
<div style="left:213px;top:434px;width:560px;height:1px;background:#8c8873;"></div>
<div style="left:213px;top:471px;width:560px;height:1px;background:#fff;"></div>
<div style="left:213px;top:453px;width:560px;height:1px;background:#8c8873;"></div>
<div style="left:213px;top:490px;width:560px;height:1px;background:#fff;"></div>
<div style="left:213px;top:472px;width:560px;height:1px;background:#8c8873;"></div>
<div style="left:213px;top:509px;width:560px;height:1px;background:#fff;"></div>
<div style="left:213px;top:491px;width:560px;height:1px;background:#8c8873;"></div>
<div style="left:213px;top:528px;width:560px;height:1px;background:#fff;"></div>
<div style="left:213px;top:510px;width:560px;height:1px;background:#8c8873;"></div>
<div style="left:213px;top:547px;width:560px;height:1px;background:#fff;"></div>
<div style="left:213px;top:529px;width:560px;height:1px;background:#8c8873;"></div>
<div style="left:213px;top:548px;width:312px;height:18px;background:#d8d3bb;"></div>
<div style="left:525px;top:549px;width:248px;height:18px;background:#ffff00;"></div>
<div style="left:213px;top:566px;width:312px;height:1px;background:#fff;"></div>
<div style="left:213px;top:548px;width:560px;height:1px;background:#8c8873;"></div>
<div style="left:213px;top:585px;width:560px;height:1px;background:#fff;"></div>
<div style="left:213px;top:567px;width:560px;height:1px;background:#8c8873;"></div>
<div style="left:213px;top:604px;width:560px;height:1px;background:#fff;"></div>
<div style="left:213px;top:586px;width:560px;height:1px;background:#8c8873;"></div>
<div style="left:213px;top:623px;width:560px;height:1px;background:#fff;"></div>
<div style="left:213px;top:605px;width:560px;height:1px;background:#8c8873;"></div>
<div style="left:213px;top:642px;width:560px;height:1px;background:#fff;"></div>
<div style="left:213px;top:624px;width:560px;height:1px;background:#8c8873;"></div>
<div style="left:213px;top:225px;width:1px;height:418px;background:#8c8873;"></div>
<div style="left:249px;top:225px;width:1px;height:418px;background:#8c8873;"></div>
<div style="left:525px;top:225px;width:1px;height:418px;background:#8c8873;"></div>
<div style="left:248px;top:225px;width:1px;height:419px;background:#fff;"></div>
<div style="left:524px;top:225px;width:1px;height:419px;background:#fff;"></div>
<div style="left:772px;top:225px;width:1px;height:419px;background:#fff;"></div>
</div>
<div id="tx">
<span style="left:24px;top:6px;font-size:13px;color:#fff;font-weight:bold;letter-spacing:-0.445px;">C:/nv2.21.alpha/demobooks/demo_canada.nv2</span>
<span style="left:9.5px;top:26px;font-size:11px;color:#000;letter-spacing:-0.231px;">Notes Menu</span>
<span style="left:84px;top:26px;font-size:11px;color:#000;letter-spacing:-0.056px;">File</span>
<span style="left:112px;top:26px;font-size:11px;color:#000;letter-spacing:-0.114px;">Edit</span>
<span style="left:143px;top:26px;font-size:11px;color:#000;letter-spacing:-0.586px;">View</span>
<span style="left:177px;top:26px;font-size:11px;color:#000;letter-spacing:-0.271px;">Window</span>
<span style="left:227px;top:26px;font-size:11px;color:#000;letter-spacing:-0.48px;">Tools</span>
<span style="left:263px;top:26px;font-size:11px;color:#000;letter-spacing:-0.391px;">Bookmarks</span>
<span style="left:326px;top:26px;font-size:11px;color:#000;letter-spacing:-0.024px;">Print</span>
<span style="left:360px;top:26px;font-size:11px;color:#000;letter-spacing:-0.28px;">Block</span>
<span style="left:397px;top:26px;font-size:11px;color:#000;letter-spacing:-0.081px;">Go to</span>
<span style="left:434px;top:26px;font-size:11px;color:#000;letter-spacing:-0.031px;">Help</span>
<span style="left:92.5px;top:50px;font-size:11px;color:#000;letter-spacing:-0.224px;">Bookmarks</span>
<span style="left:157.5px;top:50px;font-size:11px;color:#000;">+</span>
<span style="left:6px;top:73px;font-size:11px;color:#fff;font-weight:bold;letter-spacing:-0.525px;">/OBJECT</span>
<span style="left:42px;top:88px;font-size:13px;color:#000;letter-spacing:-0.071px;">Demonstration Company Inc.</span>
<span style="left:63px;top:105px;font-size:13px;color:#000;letter-spacing:-0.21px;">NewViews</span>
<span style="left:84px;top:122px;font-size:13px;color:#000;letter-spacing:0.047px;">Account</span>
<span style="left:84px;top:139px;font-size:13px;color:#000;letter-spacing:-0.234px;">Journal</span>
<span style="left:84px;top:156px;font-size:13px;color:#000;letter-spacing:-0.105px;">Payroll</span>
<span style="left:105px;top:173px;font-size:13px;color:#000;letter-spacing:-0.078px;">Canada Payroll</span>
<span style="left:127px;top:190px;font-size:13px;color:#000;letter-spacing:-0.093px;text-decoration:underline;">T4 Payrolls</span>
<span style="left:126px;top:207px;font-size:13px;color:#000;letter-spacing:-0.004px;">T4A Workers</span>
<span style="left:84px;top:224px;font-size:13px;color:#000;letter-spacing:-0.17px;">Report</span>
<span style="left:63px;top:241px;font-size:13px;color:#000;letter-spacing:0.243px;">System</span>
<span style="left:227px;top:73px;font-size:11px;color:#fff;font-weight:bold;letter-spacing:-0.068px;">/PAYROLL/CANADA/T4 - Payruns</span>
<span style="left:246px;top:91px;font-size:11px;color:#000;letter-spacing:-0.213px;">Employees</span>
<span style="left:313px;top:91px;font-size:11px;color:#000;">+</span>
<span style="left:391px;top:91px;font-size:11px;color:#000;letter-spacing:0.021px;">Payruns</span>
<span style="left:504.5px;top:91px;font-size:11px;color:#000;letter-spacing:0.002px;">Transactions</span>
<span style="left:582px;top:91px;font-size:11px;color:#000;">+</span>
<span style="left:659.5px;top:91px;font-size:11px;color:#000;letter-spacing:-0.172px;">Summary Lists</span>
<span style="left:745px;top:91px;font-size:11px;color:#000;">+</span>
<span style="left:215px;top:111px;font-size:11px;color:#fff;font-weight:bold;letter-spacing:0.195px;">.payruns.index/check_date</span>
<span style="left:217px;top:127px;font-size:12px;color:#000;letter-spacing:0.328px;white-space:pre;">Line</span>
<span style="left:214px;top:147px;font-size:12px;color:#000;letter-spacing:0.326px;">1</span>
<span style="left:253px;top:127px;font-size:12px;color:#000;letter-spacing:0.08px;white-space:pre;">Pay Year</span>
<span style="left:280px;top:147px;font-size:12px;color:#000;letter-spacing:0.326px;">2010</span>
<span style="left:313px;top:127px;font-size:12px;color:#000;letter-spacing:0.108px;white-space:pre;">Pay Period #</span>
<span style="left:382px;top:147px;font-size:12px;color:#000;letter-spacing:0.326px;">1</span>
<span style="left:394px;top:127px;font-size:12px;color:#000;letter-spacing:0.075px;white-space:pre;">Check Date  w</span>
<span style="left:391px;top:147px;font-size:12px;color:#000;letter-spacing:0.201px;">08Jan2010</span>
<span style="left:486px;top:127px;font-size:12px;color:#000;letter-spacing:0.023px;white-space:pre;">Check Start #</span>
<span style="left:483px;top:147px;font-size:12px;color:#000;letter-spacing:0.326px;">6001</span>
<span style="left:571px;top:127px;font-size:12px;color:#000;letter-spacing:-0.003px;white-space:pre;">Status</span>
<span style="left:568px;top:147px;font-size:12px;color:#000;letter-spacing:0.372px;">unprocessed</span>
<span style="left:667px;top:127px;font-size:12px;color:#000;letter-spacing:0.039px;white-space:pre;">Pay Period Start</span>
<span style="left:664px;top:147px;font-size:12px;color:#000;letter-spacing:0.269px;">26Dec2009</span>
<span style="left:766px;top:127px;font-size:12px;color:#000;letter-spacing:0.115px;white-space:pre;">Pay Period End</span>
<span style="left:763px;top:147px;font-size:12px;color:#000;letter-spacing:0.29px;">08Jan2010</span>
<span style="left:228px;top:171px;font-size:11px;color:#fff;font-weight:bold;letter-spacing:-0.103px;">/PAYRUN/CANADA/2010Jan08 - Settings</span>
<span style="left:265.5px;top:189px;font-size:11px;color:#000;letter-spacing:-0.219px;">Pay Checks</span>
<span style="left:431.5px;top:189px;font-size:11px;color:#000;letter-spacing:-0.316px;">Timecards</span>
<span style="left:588.5px;top:189px;font-size:11px;color:#000;letter-spacing:-0.204px;">Pay List</span>
<span style="left:733.5px;top:189px;font-size:11px;color:#000;letter-spacing:-0.093px;">Settings</span>
<span style="left:217px;top:208px;font-size:12px;color:#000;letter-spacing:0.328px;">Line</span>
<span style="left:253px;top:208px;font-size:12px;color:#000;letter-spacing:0.163px;">Data</span>
<span style="left:529px;top:208px;font-size:12px;color:#000;letter-spacing:0.262px;">Value</span>
<span style="left:214px;top:228px;font-size:12px;color:#000;letter-spacing:0.326px;">1</span>
<span style="left:250px;top:228px;font-size:12px;color:#000;letter-spacing:0.08px;white-space:pre;">Status</span>
<span style="left:526px;top:228px;font-size:12px;color:#000;letter-spacing:0.326px;">unprocessed</span>
<span style="left:214px;top:247px;font-size:12px;color:#000;letter-spacing:0.326px;">2</span>
<span style="left:250px;top:247px;font-size:12px;color:#000;letter-spacing:-0.145px;white-space:pre;">Pay Year</span>
<span style="left:526px;top:247px;font-size:12px;color:#000;letter-spacing:0.326px;">2010</span>
<span style="left:214px;top:266px;font-size:12px;color:#000;letter-spacing:0.326px;">3</span>
<span style="left:250px;top:266px;font-size:12px;color:#000;letter-spacing:-0.02px;white-space:pre;">Pay Period</span>
<span style="left:526px;top:266px;font-size:12px;color:#000;letter-spacing:0.326px;">1</span>
<span style="left:214px;top:285px;font-size:12px;color:#000;letter-spacing:0.326px;">4</span>
<span style="left:250px;top:285px;font-size:12px;color:#000;letter-spacing:0.13px;white-space:pre;">Check Date</span>
<span style="left:526px;top:285px;font-size:12px;color:#000;letter-spacing:0.268px;">08Jan2010</span>
<span style="left:214px;top:304px;font-size:12px;color:#000;letter-spacing:0.326px;">5</span>
<span style="left:250px;top:304px;font-size:12px;color:#000;letter-spacing:0.127px;white-space:pre;">Check Starting Reference #</span>
<span style="left:526px;top:304px;font-size:12px;color:#000;letter-spacing:0.001px;">6001</span>
<span style="left:214px;top:323px;font-size:12px;color:#000;letter-spacing:0.326px;">6</span>
<span style="left:250px;top:323px;font-size:12px;color:#000;letter-spacing:-0.017px;white-space:pre;">Pay Period Start Date</span>
<span style="left:526px;top:323px;font-size:12px;color:#000;letter-spacing:0.235px;">26Dec2009</span>
<span style="left:214px;top:342px;font-size:12px;color:#000;letter-spacing:0.326px;">7</span>
<span style="left:250px;top:342px;font-size:12px;color:#000;letter-spacing:0.033px;white-space:pre;">Pay Period End Date</span>
<span style="left:526px;top:342px;font-size:12px;color:#000;letter-spacing:0.268px;">08Jan2010</span>
<span style="left:214px;top:361px;font-size:12px;color:#000;letter-spacing:0.326px;">8</span>
<span style="left:250px;top:361px;font-size:12px;color:#000;letter-spacing:0.102px;white-space:pre;">Payroll Journal</span>
<span style="left:526px;top:361px;font-size:12px;color:#000;letter-spacing:-0.179px;">/JOURNAL/PAYROLL/PAYCHECK/CANADA</span>
<span style="left:214px;top:380px;font-size:12px;color:#000;letter-spacing:0.326px;">9</span>
<span style="left:250px;top:380px;font-size:12px;color:#000;letter-spacing:0.08px;white-space:pre;">Bank Account</span>
<span style="left:526px;top:380px;font-size:12px;color:#000;letter-spacing:-0.039px;">/ACCOUNT/BANK/1065</span>
<span style="left:214px;top:399px;font-size:12px;color:#000;letter-spacing:0.326px;">10</span>
<span style="left:250px;top:399px;font-size:12px;color:#000;letter-spacing:0.092px;white-space:pre;">Employer CPP Expense Account</span>
<span style="left:526px;top:399px;font-size:12px;color:#000;letter-spacing:-0.049px;">/ACCOUNT/EXPENSE/6425</span>
<span style="left:214px;top:418px;font-size:12px;color:#000;letter-spacing:0.326px;">11</span>
<span style="left:288.5px;top:418px;font-size:12px;color:#000;letter-spacing:0.039px;">Accrued Account</span>
<span style="left:526px;top:418px;font-size:12px;color:#000;letter-spacing:-0.068px;">/ACCOUNT/GENERAL/PR/ECPP-ACC</span>
<span style="left:214px;top:437px;font-size:12px;color:#000;letter-spacing:0.326px;">12</span>
<span style="left:250px;top:437px;font-size:12px;color:#000;letter-spacing:0.057px;white-space:pre;">Employer EI  Expense Account</span>
<span style="left:526px;top:437px;font-size:12px;color:#000;letter-spacing:-0.049px;">/ACCOUNT/EXPENSE/6435</span>
<span style="left:214px;top:456px;font-size:12px;color:#000;letter-spacing:0.326px;">13</span>
<span style="left:288.5px;top:456px;font-size:12px;color:#000;letter-spacing:0.039px;">Accrued Account</span>
<span style="left:526px;top:456px;font-size:12px;color:#000;letter-spacing:-0.106px;">/ACCOUNT/GENERAL/PR/EEI-ACC</span>
<span style="left:214px;top:475px;font-size:12px;color:#000;letter-spacing:0.326px;">14</span>
<span style="left:250px;top:475px;font-size:12px;color:#000;letter-spacing:0.066px;white-space:pre;">Employer PPIP Expense Account</span>
<span style="left:526px;top:475px;font-size:12px;color:#000;"></span>
<span style="left:214px;top:494px;font-size:12px;color:#000;letter-spacing:0.326px;">15</span>
<span style="left:291.5px;top:494px;font-size:12px;color:#000;letter-spacing:0.012px;">Accrued Account</span>
<span style="left:526px;top:494px;font-size:12px;color:#000;"></span>
<span style="left:214px;top:513px;font-size:12px;color:#000;letter-spacing:0.326px;">16</span>
<span style="left:250px;top:513px;font-size:12px;color:#000;letter-spacing:0.002px;white-space:pre;">Employer EHT/HAPSET/HSF Expense Account</span>
<span style="left:526px;top:513px;font-size:12px;color:#000;letter-spacing:-0.049px;">/ACCOUNT/EXPENSE/6445</span>
<span style="left:214px;top:532px;font-size:12px;color:#000;letter-spacing:0.326px;">17</span>
<span style="left:291.5px;top:532px;font-size:12px;color:#000;letter-spacing:0.012px;">Accrued Account</span>
<span style="left:526px;top:532px;font-size:12px;color:#000;letter-spacing:-0.101px;">/ACCOUNT/GENERAL/PR/EHT-ACC</span>
<span style="left:214px;top:551px;font-size:12px;color:#000;letter-spacing:0.326px;">18</span>
<span style="left:250px;top:551px;font-size:12px;color:#000;letter-spacing:0.037px;white-space:pre;">Employer WCB/CSST Expense Account</span>
<span style="left:526px;top:551px;font-size:12px;color:#000;letter-spacing:-0.049px;">/ACCOUNT/EXPENSE/6450</span>
<span style="left:214px;top:570px;font-size:12px;color:#000;letter-spacing:0.326px;">19</span>
<span style="left:291.5px;top:570px;font-size:12px;color:#000;letter-spacing:0.012px;">Accrued Account</span>
<span style="left:526px;top:570px;font-size:12px;color:#000;letter-spacing:-0.097px;">/ACCOUNT/GENERAL/PR/WCB-ACC</span>
<span style="left:214px;top:589px;font-size:12px;color:#000;letter-spacing:0.326px;">20</span>
<span style="left:250px;top:589px;font-size:12px;color:#000;letter-spacing:0.113px;white-space:pre;">Unallocated Wage Expense Account</span>
<span style="left:526px;top:589px;font-size:12px;color:#000;letter-spacing:-0.049px;">/ACCOUNT/EXPENSE/6420</span>
<span style="left:214px;top:608px;font-size:12px;color:#000;letter-spacing:0.326px;">21</span>
<span style="left:250px;top:608px;font-size:12px;color:#000;letter-spacing:0.348px;white-space:pre;">Name</span>
<span style="left:526px;top:608px;font-size:12px;color:#000;"></span>
<span style="left:214px;top:627px;font-size:12px;color:#000;letter-spacing:0.326px;">22</span>
<span style="left:250px;top:627px;font-size:12px;color:#000;letter-spacing:0.207px;white-space:pre;">Description</span>
<span style="left:526px;top:627px;font-size:12px;color:#000;"></span>
</div>
<div id="top">
<div style="left:209px;top:547px;width:567px;height:42px;border:2px solid #ff0000;box-sizing:border-box;filter:drop-shadow(3px 3px 2.5px rgba(0,0,0,.45));"></div>
</div>
</body></html>
